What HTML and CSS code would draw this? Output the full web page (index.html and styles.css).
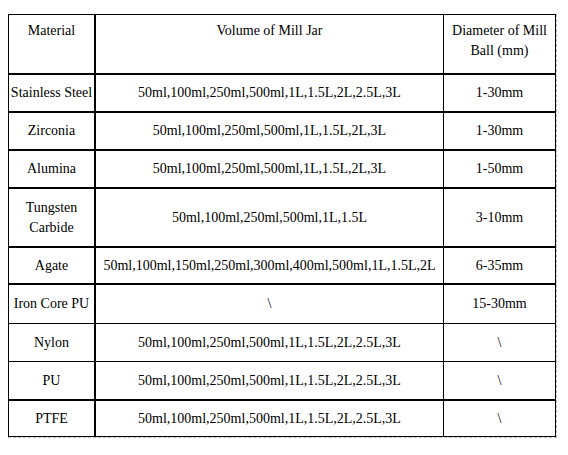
FILE: index.html
```html
<!DOCTYPE html>
<html lang="en">
<head>
<meta charset="utf-8">
<title>Mill Jar Materials</title>
<link rel="stylesheet" href="styles.css">
</head>
<body>
<div class="frame">
<table class="spec">
  <colgroup>
    <col class="c-mat">
    <col class="c-vol">
    <col class="c-dia">
  </colgroup>
  <thead>
    <tr class="r-head">
      <th>Material</th>
      <th>Volume of Mill Jar</th>
      <th>Diameter of Mill Ball (mm)</th>
    </tr>
  </thead>
  <tbody>
    <tr class="r-std thick">
      <td>Stainless Steel</td>
      <td>50ml,100ml,250ml,500ml,1L,1.5L,2L,2.5L,3L</td>
      <td>1-30mm</td>
    </tr>
    <tr class="r-std thick">
      <td>Zirconia</td>
      <td>50ml,100ml,250ml,500ml,1L,1.5L,2L,3L</td>
      <td>1-30mm</td>
    </tr>
    <tr class="r-std thick">
      <td>Alumina</td>
      <td>50ml,100ml,250ml,500ml,1L,1.5L,2L,3L</td>
      <td>1-50mm</td>
    </tr>
    <tr class="r-tall thick">
      <td>Tungsten Carbide</td>
      <td>50ml,100ml,250ml,500ml,1L,1.5L</td>
      <td>3-10mm</td>
    </tr>
    <tr class="r-agate thick">
      <td>Agate</td>
      <td>50ml,100ml,150ml,250ml,300ml,400ml,500ml,1L,1.5L,2L</td>
      <td>6-35mm</td>
    </tr>
    <tr class="r-iron">
      <td>Iron Core PU</td>
      <td>\</td>
      <td>15-30mm</td>
    </tr>
    <tr class="r-nylon">
      <td>Nylon</td>
      <td>50ml,100ml,250ml,500ml,1L,1.5L,2L,2.5L,3L</td>
      <td>\</td>
    </tr>
    <tr class="r-pu thick">
      <td>PU</td>
      <td>50ml,100ml,250ml,500ml,1L,1.5L,2L,2.5L,3L</td>
      <td>\</td>
    </tr>
    <tr class="r-last">
      <td>PTFE</td>
      <td>50ml,100ml,250ml,500ml,1L,1.5L,2L,2.5L,3L</td>
      <td>\</td>
    </tr>
  </tbody>
</table>
</div>
</body>
</html>
```

FILE: styles.css
```css
html, body {
  margin: 0;
  padding: 0;
  background: #ffffff;
}

body {
  font-family: "Liberation Serif", "Times New Roman", serif;
  font-size: 14px;
  color: #000000;
}

.frame {
  display: inline-block;
  margin: 14px 0 0 8px;
  border-right: 1px dashed #bdbdbd;
  border-bottom: 1px dashed #bdbdbd;
}

.spec {
  border-collapse: separate;
  border-spacing: 0;
  table-layout: fixed;
  width: 548px;
  border-left: 1px solid #000;
  border-top: 1px solid #000;
}

.c-mat { width: 87px; }
.c-vol { width: 348px; }
.c-dia { width: 112px; }

.spec th,
.spec td {
  box-sizing: border-box;
  padding: 0 2px;
  text-align: center;
  font-weight: normal;
  line-height: 20px;
  border-right: 1px solid #000;
  border-bottom: 1px solid #000;
}

.spec th:first-child,
.spec td:first-child {
  border-right-width: 2px;
  padding: 0;
}

.spec th {
  vertical-align: top;
  padding-top: 6px;
  border-bottom-width: 2px;
}

.spec th:first-child {
  padding-top: 6px;
}

.spec td {
  vertical-align: middle;
}

.spec th:last-child {
  padding: 6px 5px 0;
}

.r-head { height: 60px; }
.r-std { height: 38px; }
.r-tall { height: 59px; }
.r-agate { height: 37px; }
.r-iron { height: 39px; }
.r-nylon { height: 38px; }
.r-pu { height: 39px; }
.r-last { height: 36px; }

.thick td {
  border-bottom-width: 2px;
}
```
